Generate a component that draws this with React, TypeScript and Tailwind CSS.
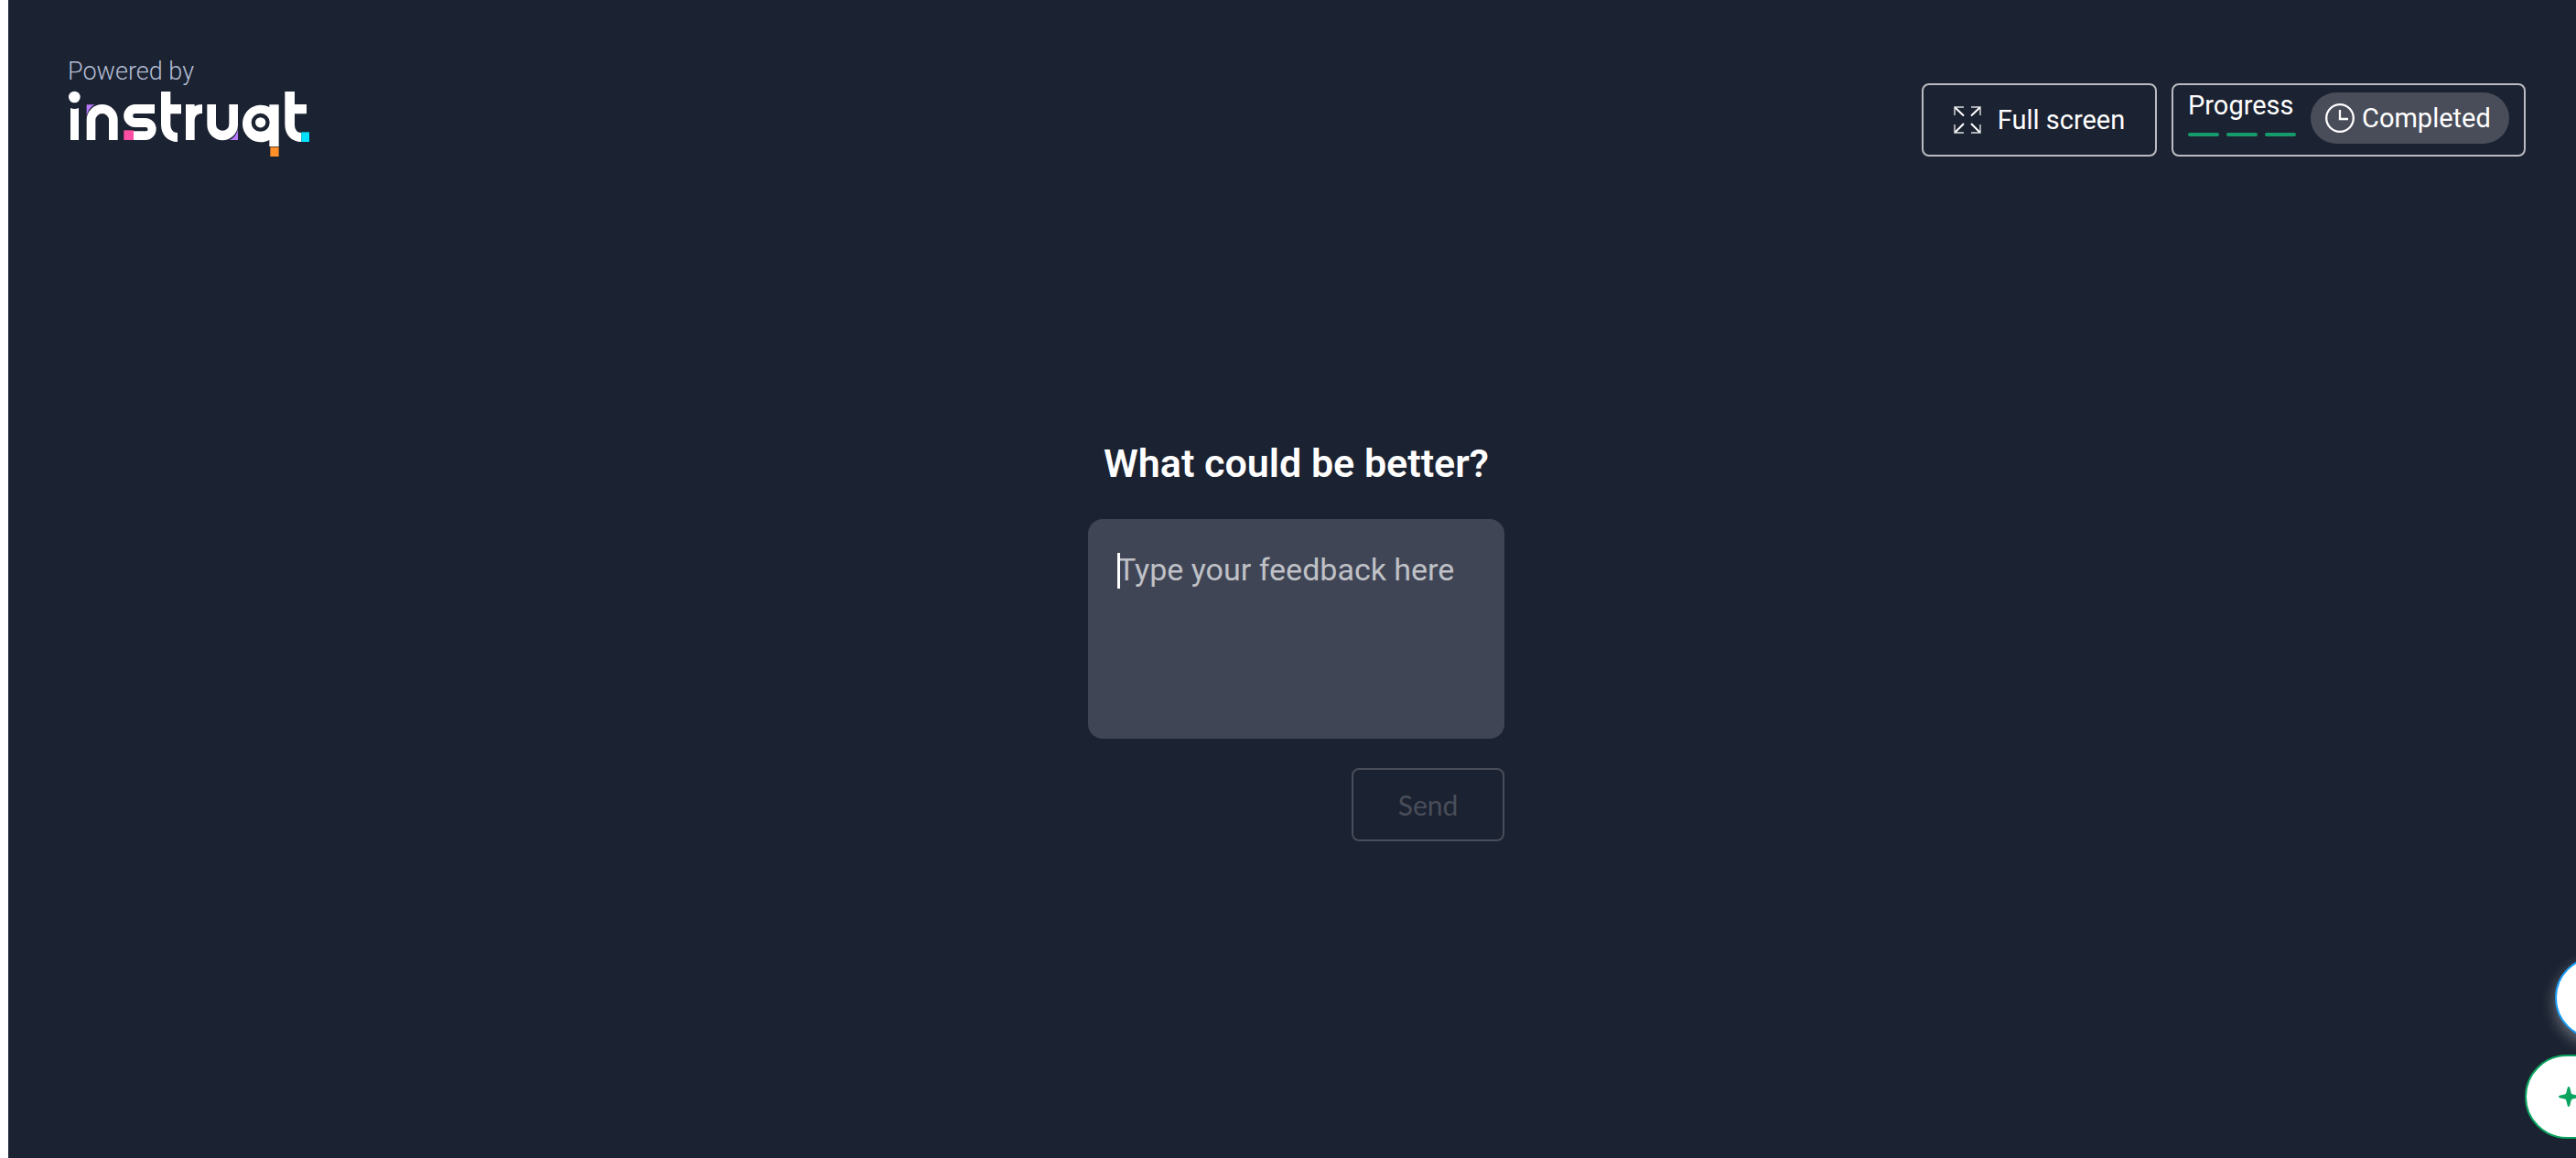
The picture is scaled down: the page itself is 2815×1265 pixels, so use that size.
import React from "react";

function InstruqtLogo() {
  return (
    <svg viewBox="219 144 798 219" className="h-[73px] w-[266px]" role="img" aria-label="instruqt">
      <g fill="#ffffff">
        <circle cx="244" cy="168" r="19" />
        <path d="M231 204C240 208 249 208 258 204V309H231z" />
        <path d="M284 309V243a51 51 0 0 1 102 0V309H357V244a22 22 0 0 0-44 0V309z" />
        <path d="M507 192H443a37.5 37.5 0 0 0 0 75H478a6.5 6.5 0 0 1 0 13H438V309H476a36 36 0 0 0 0-72H443a7.500 7.500 0 0 1 0-15H507z" />
        <path d="M528 150H559V192H594V223H559V258C559 275 568 285 582 285V315C550 315 528 292 528 258z" />
        <path d="M609 309V192H638V199C644 194 652 192 663 192V222C647 222 638 230 638 246V309z" />
        <path d="M679 192V259a50.500 50.500 0 0 0 101 0V192H751V257a21.500 21.500 0 0 1-43 0V192z" />
        <path
          fillRule="evenodd"
          d="M883 201V193H914V330H883V309A60 61 0 1 1 883 201zM854 221.500a30 30 0 1 0 0 60a30 30 0 0 0 0-60z"
        />
        <circle cx="854" cy="251.500" r="17" />
        <path d="M934 150H966V192H1005V223H966V258C966 275 974 285 988 285V315C956 315 934 292 934 258z" />
      </g>
      <path d="M284 193H311C296 200 286 214 284 236z" fill="#b97aff" />
      <path d="M780 309H752C768 302 778 288 780 270z" fill="#b97aff" />
      <rect x="406" y="277" width="32" height="32" fill="#ff4fa3" />
      <rect x="886" y="332" width="28" height="31" fill="#ff8f28" />
      <rect x="988" y="283" width="26" height="32" fill="#00e1ff" />
    </svg>
  );
}

function ExpandIcon() {
  return (
    <svg viewBox="0 0 30 30" className="size-[30px]" fill="none" stroke="#ffffff" aria-hidden="true">
      <path strokeWidth="1.4" strokeOpacity="0.85" d="M1 10V1H11M19 1H29V10M1 20V29H11M19 29H29V20" />
      <path strokeWidth="2" d="M1.500 1.500L11 10.500M28.500 1.500L19 10.500M1.500 28.500L11 19M28.500 28.500L19 19" />
    </svg>
  );
}

function ClockIcon() {
  return (
    <svg viewBox="0 0 32 32" className="size-8" fill="none" stroke="#ffffff" strokeWidth="2.300" aria-hidden="true">
      <circle cx="16" cy="16" r="14.800" />
      <path d="M16 7V17H25" />
    </svg>
  );
}

function Header() {
  return (
    <header className="flex items-end justify-between px-16">
      <div className="flex flex-col gap-0.5">
        <p className="pl-px font-['Roboto',sans-serif] text-[27px] leading-9 font-light text-[#b3bdd4]">Powered by</p>
        <InstruqtLogo />
      </div>
      <div className="flex gap-4">
        <button
          type="button"
          className="flex h-20 min-w-[257px] items-center justify-center gap-[18px] rounded-lg border-2 border-[#bbbcc1] px-8 text-[29px] leading-9"
        >
          <ExpandIcon />
          Full screen
        </button>
        <div className="flex h-20 items-start gap-4 rounded-lg border-2 border-[#bbbcc1] px-4 pt-2">
          <div className="w-[118px]">
            <p className="-mt-1 text-[29px] leading-9">Progress</p>
            <div className="mt-3 flex gap-2">
              <span className="h-1 flex-1 rounded-full bg-[#169c6c]" />
              <span className="h-1 flex-1 rounded-full bg-[#169c6c]" />
              <span className="h-1 flex-1 rounded-full bg-[#169c6c]" />
            </div>
          </div>
          <div className="flex h-14 min-w-[217px] items-center gap-2 rounded-full bg-[#494d59] px-4 text-[29px] leading-9">
            <ClockIcon />
            Completed
          </div>
        </div>
      </div>
    </header>
  );
}

function FeedbackForm() {
  return (
    <form className="mx-auto mt-[306px] flex w-[455px] flex-col items-end" onSubmit={(e) => e.preventDefault()}>
      <label htmlFor="feedback" className="w-full text-center text-[43px] leading-[58px] font-semibold">
        What could be better?
      </label>
      <div className="relative mt-8 h-60 w-full">
        <textarea
          id="feedback"
          placeholder="Type your feedback here"
          className="block size-full resize-none rounded-2xl bg-[#404556] px-8 py-8 text-[34px] leading-[46px] text-white outline-none placeholder:text-[#bfc1c6]"
        />
        <span className="absolute top-[37px] left-8 h-[39px] w-[3px] bg-white" aria-hidden="true" />
      </div>
      <button
        type="submit"
        disabled
        className="mt-8 h-20 w-[167px] rounded-lg border-2 border-[#494d59] font-['Lato',sans-serif] text-[30px] text-[#494d59]"
      >
        Send
      </button>
    </form>
  );
}

function FloatingButtons() {
  return (
    <>
      <button
        type="button"
        aria-label="Open chat"
        className="absolute right-[-58px] bottom-[130px] size-[90px] rounded-full border-2 border-[#1a9cf5] bg-white shadow-[0_6px_16px_rgba(255,255,255,0.35)]"
      />
      <button
        type="button"
        aria-label="Open assistant"
        className="absolute right-[-81px] bottom-[21px] flex h-[92px] w-[146px] items-center rounded-full border-2 border-[#0ba360] bg-white pl-[34px]"
      >
        <svg viewBox="0 0 24 24" className="size-6" fill="#0ba360" aria-hidden="true">
          <path d="M12 1C12.900 1 13.200 1.800 13.500 3L14.600 7.500C15 8.900 15.400 9.200 16.600 9.500L21 10.500C22.400 10.900 23 11.300 23 12S22.400 13.100 21 13.500L16.600 14.500C15.400 14.800 15 15.100 14.600 16.500L13.500 21C13.200 22.200 12.900 23 12 23S10.800 22.200 10.500 21L9.400 16.500C9 15.100 8.600 14.800 7.400 14.500L3 13.500C1.600 13.100 1 12.700 1 12S1.600 10.900 3 10.500L7.400 9.500C8.600 9.200 9 8.900 9.400 7.500L10.500 3C10.800 1.800 11.100 1 12 1z" />
        </svg>
      </button>
    </>
  );
}

export default function App() {
  return (
    <div className="overflow-hidden bg-white pl-[9px]">
      <main className="relative -mr-[9px] min-h-screen bg-[#1b2231] pt-[60px] font-['Roboto',sans-serif] text-white">
        <Header />
        <FeedbackForm />
        <FloatingButtons />
      </main>
    </div>
  );
}
